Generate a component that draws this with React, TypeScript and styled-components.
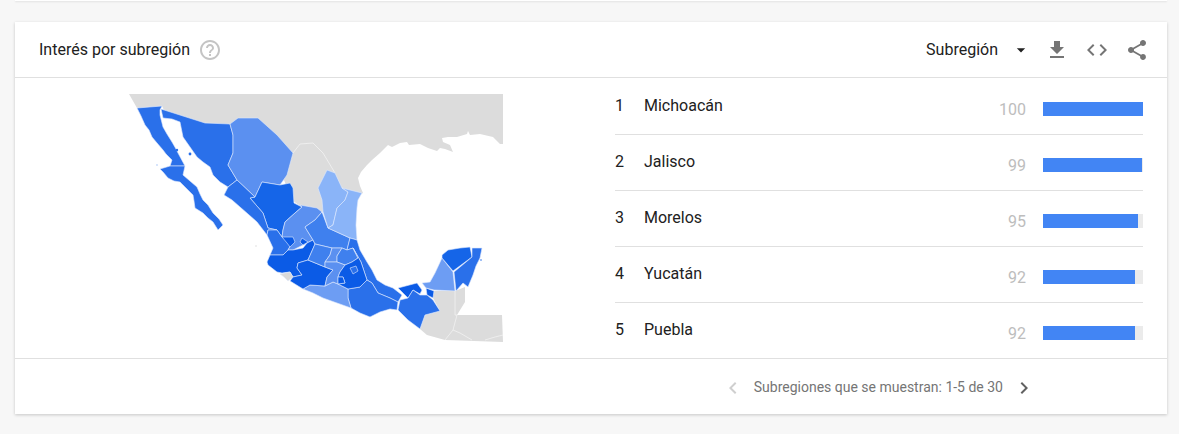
import React from "react";
import styled, { createGlobalStyle } from "styled-components";

const Global = createGlobalStyle`
  html, body { margin: 0; padding: 0; background: #f7f7f7; }
  body { font-family: Roboto, "Noto Sans", sans-serif; width: 1179px; height: 434px; overflow: hidden; }
`;

const Page = styled.div`
  width: 1179px;
  height: 434px;
  padding: 0 12px 0 15px;
  box-sizing: border-box;
  background: #f7f7f7;
`;
const PrevCardEnd = styled.div`
  height: 1px;
  margin-bottom: 21px;
  background: #fff;
  box-shadow: 0 1px 2px rgba(0, 0, 0, 0.12);
`;
const Card = styled.section`
  width: 1152px;
  height: 392px;
  background: #fff;
  box-shadow: 0 1px 3px rgba(0, 0, 0, 0.2);
  display: flex;
  flex-direction: column;
`;
const Header = styled.header`
  height: 56px;
  box-sizing: border-box;
  border-bottom: 1px solid #e0e0e0;
  display: flex;
  align-items: center;
  padding: 0 18px 0 24px;
`;
const Title = styled.h2`
  margin: 0;
  font-size: 16px;
  font-weight: 400;
  color: #212121;
`;
const HelpIcon = styled.svg`
  width: 24px;
  height: 24px;
  margin-left: 8px;
  fill: #c4c4c4;
`;
const Spacer = styled.div`
  flex: 1;
`;
const Selector = styled.div`
  display: flex;
  align-items: center;
  font-size: 16px;
  color: #212121;
  margin-right: -2px;
`;
const Caret = styled.svg`
  width: 20px;
  height: 20px;
  margin: 0 0 0 13px;
  fill: #212121;
`;
const ActionIcon = styled.svg`
  width: 24px;
  height: 24px;
  margin: 0 0 0 16px;
  fill: #757575;
`;
const Body = styled.div`
  height: 280px;
  display: flex;
`;
const MapBox = styled.div`
  width: 375px;
  height: 248px;
  margin: 16px 0 0 113px;
`;
const MapSvg = styled.svg`
  display: block;
  width: 375px;
  height: 248px;
`;
const List = styled.div`
  width: 528px;
  margin-left: 112px;
  padding-top: 1px;
`;
const Row = styled.div<{ $last?: boolean }>`
  height: ${(p) => (p.$last ? "55px" : "56px")};
  box-sizing: border-box;
  border-bottom: ${(p) => (p.$last ? "none" : "1px solid #e0e0e0")};
  display: flex;
  font-size: 16px;
  color: #212121;
`;
const Rank = styled.div`
  width: 29px;
  padding-top: 17px;
  line-height: 20px;
`;
const Name = styled.div`
  flex: 1;
  padding-top: 17px;
  line-height: 20px;
`;
const Value = styled.div`
  width: 59px;
  text-align: right;
  padding-top: 21px;
  line-height: 20px;
  font-size: 16px;
  color: #bdbdbd;
`;
const Track = styled.div`
  width: 100px;
  height: 14px;
  margin: 23px 0 0 17px;
  background: #ebebeb;
`;
const Fill = styled.div`
  height: 100%;
  background: #4285f4;
`;
const Footer = styled.footer`
  height: 56px;
  box-sizing: border-box;
  border-top: 1px solid #e0e0e0;
  display: flex;
  align-items: center;
  justify-content: flex-end;
  padding-right: 131px;
`;
const PageText = styled.span`
  font-size: 14px;
  color: #757575;
  margin: 0 9px;
`;
const Chevron = styled.svg<{ $muted?: boolean }>`
  width: 24px;
  height: 24px;
  margin-top: 2px;
  fill: ${(p) => (p.$muted ? "#cfcfcf" : "#616161")};
`;

const C = { a: "#0b5be6", b: "#1565e8", c: "#2a70ea", d: "#3f80ee", e: "#5b90f0", f: "#6d9df3", g: "#8ab4f8" };

const states: [string, string][] = [
  // Baja California
  [C.c, "137,108 162,106 160,110 160,115 163,127 167,134 172,142 176,149 178,153 185,166 170,166 172,160 166,154 163,150 157,143 152,137 149,130 145,125 141,116"],
  // Baja California Sur
  [C.c, "160,169 170,166 185,166 183,175 190,181 197,187 200,194 203,200 208,205 213,213 219,219 223,225 218,230 213,222 208,218 203,213 195,208 194,201 193,195 183,185 180,182 174,181 168,178 163,172"],
  // Sonora
  [C.c, "161,109 205,123 230,124 233,135 233,153 228,165 237,180 228,187 220,182 213,175 210,167 203,162 197,157 190,147 183,137 180,122 172,119 163,118"],
  // Chihuahua
  [C.e, "230,124 238,118 258,118 277,135 293,153 287,175 280,185 262,182 255,197 237,180 228,165 233,153 233,135"],
  // Durango
  [C.b, "262,182 280,185 290,183 293,188 294,203 302,207 295,213 285,222 283,230 282,237 277,230 268,228 263,213 250,198 255,197"],
  // Sinaloa
  [C.c, "228,187 237,180 255,197 250,198 263,213 268,228 277,230 268,230 267,235 257,222 248,214 240,207 232,200 224,195"],
  // Nayarit
  [C.c, "268,230 277,230 282,237 292,243 288,250 283,255 270,255 273,248 267,235"],
  // Zacatecas
  [C.e, "295,213 302,207 300,205 317,208 322,212 315,220 305,227 313,240 307,243 293,250 288,250 292,243 282,237 283,230 285,222"],
  // Aguascalientes
  [C.a, "282,237 293,237 295,242 290,247 287,243"],
  // Jalisco
  [C.a, "270,255 283,255 288,250 293,250 303,248 307,243 313,240 315,244 308,260 298,263 297,268 302,275 293,277 290,272 282,273 277,272 268,265 267,262"],
  // Jalisco north patch
  [C.a, "302,238 308,242 303,245 300,242"],
  // Colima
  ["#d9d9d9", "280,274 290,272 293,277 288,281 284,277"],
  // San Luis Potosi
  [C.d, "322,212 328,228 350,238 347,250 342,248 332,248 315,244 313,240 305,227 315,220"],
  // Nuevo Leon
  [C.g, "327,170 335,173 342,188 348,192 345,200 337,208 333,225 328,228 323,212 322,200 318,188"],
  // Tamaulipas
  [C.g, "342,188 362,193 358,200 357,208 356,225 357,240 350,238 328,228 333,225 337,208 345,200 348,192"],
  // Veracruz
  [C.c, "350,238 357,240 360,250 367,262 372,270 377,280 385,285 393,288 402,295 398,302 390,298 378,293 372,283 367,280 361,262 353,248 347,250"],
  // Oaxaca
  [C.c, "348,289 360,287 367,280 372,283 378,293 390,298 398,302 397,310 390,309 380,312 370,317 360,313 351,308 348,298"],
  // Guerrero
  [C.f, "303,289 310,285 325,286 333,282 338,284 348,289 348,298 351,308 337,303 323,298 313,293"],
  // Michoacan
  [C.a, "290,281 293,277 302,275 297,268 298,263 308,260 325,267 333,270 327,277 325,286 310,285 303,289"],
  // Guanajuato
  [C.d, "315,244 332,248 330,255 325,262 325,267 308,260"],
  // Queretaro
  [C.e, "332,248 342,248 337,256 337,262 325,262 330,255"],
  // Hidalgo
  [C.d, "342,248 347,250 353,248 358,258 352,262 345,265 337,262 337,256"],
  // Mexico
  [C.e, "325,262 337,262 345,265 340,272 338,277 338,284 333,282 325,286 327,277 333,270 325,267"],
  // Puebla
  [C.a, "353,248 361,262 367,280 360,287 348,289 338,284 345,283 343,277 338,277 340,272 345,265 352,262 358,258"],
  // Morelos
  [C.a, "338,277 343,277 345,283 338,284"],
  // Tlaxcala
  [C.c, "350,268 356,266 358,271 353,274"],
  // Tabasco
  [C.a, "398,288 417,283 422,290 420,294 413,290 408,298 402,292"],
  [C.a, "426,288 434,291 433,298 427,295"],
  // Chiapas
  [C.c, "398,310 400,300 408,298 413,290 420,295 427,295 433,300 440,311 425,315 420,329 408,320"],
  // Campeche
  [C.f, "422,283 430,282 435,273 442,258 453,272 455,291 434,290 426,288"],
  // Yucatan
  [C.b, "442,255 448,250 460,248 470,247 472,257 453,271 442,258"],
  // Quintana Roo
  [C.c, "472,248 482,248 480,258 476,266 473,275 468,287 463,283 456,291 454,272 472,257"],
];

const grey =
  "129,94 503,94 503,144 500,144 493,137 480,134 470,135 468,131 467,134 457,137 448,137 442,138 443,142 450,145 453,152 445,149 440,148 437,151 428,148 420,144 409,145 407,142 400,143 392,147 388,145 380,153 372,160 367,165 361,172 358,178 360,186 363,193 340,205 322,212 300,206 292,200 280,170 250,150 230,130 200,125 165,112 162,106 137,108";

const south =
  "434,291 455,291 465,287 465,302 457,315 468,315 502,315 503,342 445,340 427,335 420,329 425,315 440,311 433,298";

const Map = () => (
  <MapSvg viewBox="128 94 375 248">
    <polygon points={grey} fill="#dcdcdc" />
    <polygon points={south} fill="#dcdcdc" />
    <polyline points="294,203 300,206 322,212" fill="none" stroke="#f5f5f5" strokeWidth="0.7" />
    <polyline points="293,153 300,144 313,143 323,153 335,173" fill="none" stroke="#f5f5f5" strokeWidth="0.7" />
    <polyline points="455,291 455,315 457,315" fill="none" stroke="#f5f5f5" strokeWidth="0.7" />
    <polyline points="457,315 453,330 445,340" fill="none" stroke="#f5f5f5" strokeWidth="0.7" />
    <polyline points="453,330 460,333 472,340" fill="none" stroke="#f5f5f5" strokeWidth="0.7" />
    <polyline points="485,340 495,337 503,335" fill="none" stroke="#f5f5f5" strokeWidth="0.7" />
    {states.map(([fill, points], i) => (
      <polygon key={i} points={points} fill={fill} stroke="#dfeafd" strokeWidth="0.6" strokeLinejoin="round" />
    ))}
    <circle cx="123" cy="153" r="1" fill="#ddd" />
    <circle cx="157" cy="165" r="0.9" fill="#c5d8fa" />
    <circle cx="177" cy="150" r="1.2" fill={C.c} />
    <circle cx="190" cy="154" r="1.4" fill={C.c} />
    <circle cx="256" cy="246" r="0.8" fill="#ddd" />
    <circle cx="481" cy="260" r="0.8" fill={C.c} />
  </MapSvg>
);

const rows = [
  { n: 1, name: "Michoacán", v: 100 },
  { n: 2, name: "Jalisco", v: 99 },
  { n: 3, name: "Morelos", v: 95 },
  { n: 4, name: "Yucatán", v: 92 },
  { n: 5, name: "Puebla", v: 92 },
];

export default function App() {
  return (
    <Page>
      <Global />
      <PrevCardEnd />
      <Card>
        <Header>
          <Title>Interés por subregión</Title>
          <HelpIcon viewBox="0 0 24 24">
            <path d="M11 18h2v-2h-2v2zm1-16C6.48 2 2 6.48 2 12s4.48 10 10 10 10-4.48 10-10S17.52 2 12 2zm0 18c-4.41 0-8-3.59-8-8s3.59-8 8-8 8 3.59 8 8-3.59 8-8 8zm0-14c-2.21 0-4 1.79-4 4h2c0-1.1.9-2 2-2s2 .9 2 2c0 2-3 1.75-3 5h2c0-2.25 3-2.5 3-5 0-2.21-1.79-4-4-4z" />
          </HelpIcon>
          <Spacer />
          <Selector>
            Subregión
            <Caret viewBox="0 0 24 24">
              <path d="M7 10l5 5 5-5z" />
            </Caret>
          </Selector>
          <ActionIcon viewBox="0 0 24 24">
            <path d="M19 9h-4V3H9v6H5l7 7 7-7zM5 18v2h14v-2H5z" />
          </ActionIcon>
          <ActionIcon viewBox="0 0 24 24">
            <path d="M9.4 16.6L4.8 12l4.6-4.6L8 6l-6 6 6 6 1.4-1.4zm5.2 0l4.6-4.6-4.6-4.6L16 6l6 6-6 6-1.4-1.4z" />
          </ActionIcon>
          <ActionIcon viewBox="0 0 24 24">
            <path d="M18 16.08c-.76 0-1.44.3-1.96.77L8.91 12.7c.05-.23.09-.46.09-.7s-.04-.47-.09-.7l7.05-4.11c.54.5 1.25.81 2.04.81 1.66 0 3-1.34 3-3s-1.34-3-3-3-3 1.34-3 3c0 .24.04.47.09.7L8.04 9.81C7.5 9.31 6.79 9 6 9c-1.66 0-3 1.34-3 3s1.34 3 3 3c.79 0 1.5-.31 2.04-.81l7.12 4.16c-.05.21-.08.43-.08.65 0 1.61 1.31 2.92 2.92 2.92 1.61 0 2.92-1.31 2.92-2.92s-1.31-2.92-2.92-2.92z" />
          </ActionIcon>
        </Header>
        <Body>
          <MapBox>
            <Map />
          </MapBox>
          <List>
            {rows.map((r, i) => (
              <Row key={r.n} $last={i === rows.length - 1}>
                <Rank>{r.n}</Rank>
                <Name>{r.name}</Name>
                <Value>{r.v}</Value>
                <Track>
                  <Fill style={{ width: `${r.v}%` }} />
                </Track>
              </Row>
            ))}
          </List>
        </Body>
        <Footer>
          <Chevron $muted viewBox="0 0 24 24">
            <path d="M15.41 7.41L14 6l-6 6 6 6 1.41-1.41L10.83 12z" />
          </Chevron>
          <PageText>Subregiones que se muestran: 1-5 de 30</PageText>
          <Chevron viewBox="0 0 24 24">
            <path d="M8.59 16.59L10 18l6-6-6-6-1.41 1.41L13.17 12z" />
          </Chevron>
        </Footer>
      </Card>
    </Page>
  );
}
